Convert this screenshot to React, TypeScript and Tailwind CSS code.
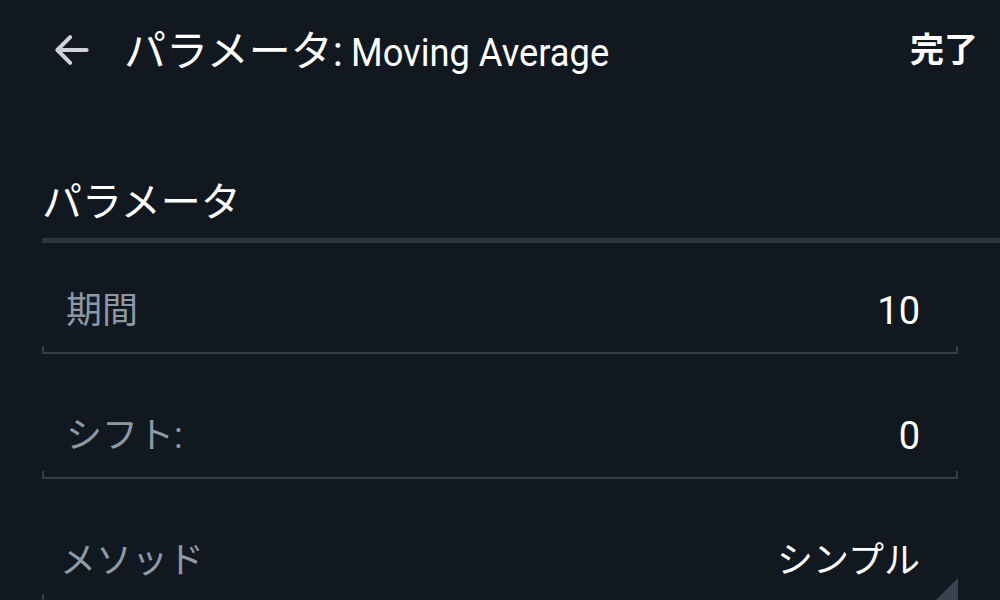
import React from 'react';

const jp = "font-['Roboto','Noto_Sans_CJK_JP',sans-serif]";

const Field = ({ label, value }: { label: string; value: string }) => (
  <div className="mx-[42px] w-[916px]">
    <div className="flex h-[70px] items-center justify-between pl-[24px] pr-[38px]">
      <span className="text-[36px] leading-none text-[#8d99a6]">{label}</span>
      <span className="text-[38px] leading-none text-white">{value}</span>
    </div>
    <div className="h-[8px] border-x-2 border-b-2 border-[#363d47]" />
  </div>
);

const App: React.FC = () => {
  return (
    <div className={`h-[600px] w-[1000px] overflow-hidden bg-[#111820] ${jp}`}>
      <header className="flex h-[100px] items-center pr-[22px]">
        <svg className="ml-[50px] h-[44px] w-[44px]" viewBox="0 0 24 24" fill="none">
          <path d="M20 12H5M11 5l-7 7 7 7" stroke="#cfd3d8" strokeWidth="2.2" strokeLinecap="round" strokeLinejoin="round" />
        </svg>
        <h1 className="ml-[30px] mt-[4px] whitespace-nowrap text-[42px] leading-none text-white">
          パラメータ:<span className="ml-[8px] inline-block origin-left scale-x-[0.93] text-[39px]">Moving Average</span>
        </h1>
        <button className="ml-auto text-[34px] font-bold leading-none text-white">完了</button>
      </header>

      <section className="mt-[83px]">
        <h2 className="pl-[42px] text-[40px] leading-none text-white">パラメータ</h2>
        <div className="ml-[42px] mt-[15px] h-[5px] bg-[#2e353f]" />
      </section>

      <div className="mt-[33px] flex flex-col gap-[47px]">
        <Field label="期間" value="10" />
        <Field label="シフト:" value="0" />
        <div className="relative mx-[42px] h-[84px] w-[916px]">
          <div className="flex h-[70px] items-center justify-between pl-[18px] pr-[38px]">
            <span className="text-[36px] leading-none text-[#8d99a6]">メソッド</span>
            <span className="text-[36px] leading-none text-white">シンプル</span>
          </div>
          <div className="absolute bottom-0 left-0 h-[16px] w-[2px] bg-[#363d47]" />
          <svg className="absolute bottom-[2px] right-0 h-[30px] w-[30px]" viewBox="0 0 30 30">
            <path d="M30 0V30H0Z" fill="#3a4250" />
          </svg>
        </div>
      </div>
    </div>
  );
};

export default App;
